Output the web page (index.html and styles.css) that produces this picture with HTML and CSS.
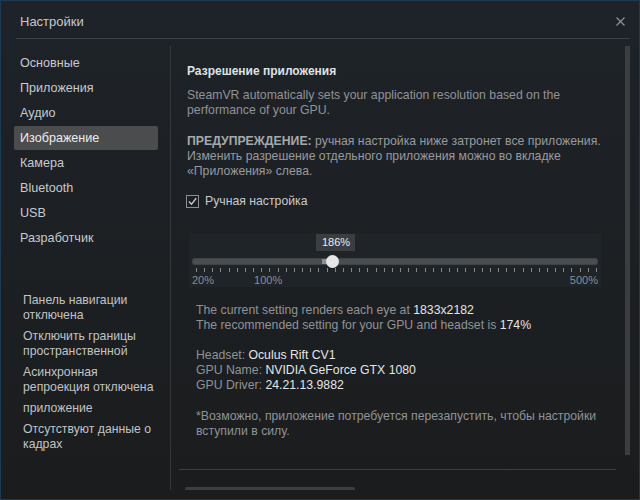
FILE: index.html
```html
<!DOCTYPE html>
<html lang="ru">
<head>
    <meta charset="UTF-8">
    <title>Настройки</title>
    <link rel="stylesheet" href="styles.css">
</head>
<body>
    <div class="window">
        <div class="titlebar">
            <span class="title">Настройки</span>
            <svg class="close" width="9" height="9" viewBox="0 0 9 9">
                <path d="M0.5 0.5 L8.5 8.5 M8.5 0.5 L0.5 8.5" stroke="#8f9296" stroke-width="1.2" fill="none"/>
            </svg>
        </div>
        <div class="title-rule"></div>

        <div class="body">
            <div class="sidebar">
                <div class="nav">
                    <a href="#">Основные</a>
                    <a href="#">Приложения</a>
                    <a href="#">Аудио</a>
                    <a href="#" class="active">Изображение</a>
                    <a href="#">Камера</a>
                    <a href="#">Bluetooth</a>
                    <a href="#">USB</a>
                    <a href="#">Разработчик</a>
                </div>
                <ul class="status">
                    <li>Панель навигации отключена</li>
                    <li>Отключить границы пространственной</li>
                    <li>Асинхронная репроекция отключена</li>
                    <li>приложение</li>
                    <li>Отсутствуют данные о кадрах</li>
                </ul>
            </div>

            <div class="main">
                <div class="pane">
                    <div class="scroll">
                        <h2>Разрешение приложения</h2>
                        <p class="lead">SteamVR automatically sets your application resolution based on the performance of your GPU.</p>
                        <p class="warn"><b>ПРЕДУПРЕЖДЕНИЕ:</b> ручная настройка ниже затронет все приложения. Изменить разрешение отдельного приложения можно во вкладке «Приложения» слева.</p>

                        <label class="check">
                            <svg width="13" height="13" viewBox="0 0 13 13">
                                <rect x="0.5" y="0.5" width="12" height="12" fill="#1c2025" stroke="#8c8f93"/>
                                <path d="M3 6.5 L5.5 9.2 L10.2 3.2" stroke="#c4c7ca" stroke-width="1.4" fill="none"/>
                            </svg>
                            <span>Ручная настройка</span>
                        </label>

                        <div class="slider-box">
                            <div class="bubble-row">
                                <span class="bubble" style="left: calc(34.6% - 16px)">186%</span>
                            </div>
                            <div class="track">
                                <span class="marker" style="left: 32.1%"></span>
                                <span class="thumb" style="left: calc(34.6% - 6.5px)"></span>
                            </div>
                            <div class="ticks"></div>
                            <div class="scale">
                                <span>20%</span>
                                <span class="mid">100%</span>
                                <span class="end">500%</span>
                            </div>
                        </div>

                        <div class="info">
                            <p>The current setting renders each eye at <span class="val">1833x2182</span><br>
                            The recommended setting for your GPU and headset is <span class="val">174%</span></p>
                            <p>Headset: <span class="val">Oculus Rift CV1</span><br>
                            GPU Name: <span class="val">NVIDIA GeForce GTX 1080</span><br>
                            GPU Driver: <span class="val">24.21.13.9882</span></p>
                            <p class="note">*Возможно, приложение потребуется перезапустить, чтобы настройки вступили в силу.</p>
                        </div>
                    </div>
                    <div class="scrollbar"></div>
                </div>
                <div class="footer-rule"></div>
                <div class="footer-btn"></div>
            </div>
        </div>
    </div>
</body>
</html>
```
FILE: styles.css
```css
* { box-sizing: border-box; }
body { margin: 0; background: #1b1c1d; font-family: "Liberation Sans", Arial, sans-serif; font-size: 12.25px; }
.window { width: 640px; height: 500px; border: 1px solid #1d3a50; background: linear-gradient(#1e2329, #1c1f22 60%, #1b1c1d); display: flex; flex-direction: column; overflow: hidden; }

.titlebar { height: 37px; padding: 4px 14px 0 19px; display: flex; align-items: center; justify-content: space-between; }
.title { color: #c4c8cc; font-size: 13px; }
.title-rule { height: 1px; margin: 0 9px 0 15px; background: #3d4044; }

.body { flex: 1; display: flex; padding: 7px 0 9px; min-height: 0; }

.sidebar { width: 170px; padding: 5px 12px 0 13px; border-right: 1px solid #35383b; }
.nav a { display: block; height: 24px; line-height: 25px; margin-bottom: 1px; padding-left: 6px; color: #c7cacd; font-size: 12.6px; text-decoration: none; border-radius: 2px; }
.nav a.active { background: #4b4c4e; color: #eceded; }
.status { list-style: none; margin: 43px 0 0; padding: 0 0 0 9px; color: #c0c3c6; line-height: 15px; }
.status li { margin-bottom: 6px; }

.main { flex: 1; display: flex; flex-direction: column; overflow: hidden; }
.pane { display: flex; height: 409px; flex-shrink: 0; }
.scroll { flex: 1; padding: 18px 13px 0 16px; line-height: 15px; }
.scrollbar { width: 5px; margin-right: 9px; background: #3c3d3f; }
.footer-rule { flex-shrink: 0; height: 1px; margin: 14px 23px 0 8px; background: #3d3f42; }
.footer-btn { flex-shrink: 0; width: 170px; height: 12px; margin: 17px 0 0 14px; background: #3d3e40; border-radius: 2px 2px 0 0; }

h2 { margin: 0; font-size: 12px; color: #dfe1e3; }
.lead { margin: 9px 0 0; color: #8f9397; }
.warn { margin: 16px 0 0; color: #979a9e; }
.warn b { color: #a6a9ac; }

.check { display: flex; align-items: center; height: 15px; margin-top: 15px; color: #c7cacd; }
.check svg { margin: 0 6px 0 -1px; }

.slider-box { margin: 24px 0 0 2px; width: 412px; height: 54px; padding: 1px 3px 0; background: #1f2429; }
.bubble-row { position: relative; height: 17px; }
.bubble { position: absolute; top: 0; width: 39px; height: 17px; line-height: 17px; text-align: center; background: #3b3e41; color: #ececec; font-size: 11px; }
.track { position: relative; height: 7px; margin-top: 7px; border-radius: 4px; background: #4b4e51; box-shadow: inset 0 0 0 1px #404346; }
.marker { position: absolute; top: 1px; width: 5px; height: 5px; background: #8c8e90; }
.thumb { position: absolute; top: -3px; width: 13px; height: 13px; border-radius: 50%; background: #e6e6e6; }
.ticks { width: 401px; height: 4px; margin: 3px 0 0 4px; background: repeating-linear-gradient(to right, #85888b 0 1px, transparent 1px 8.163px); }
.scale { display: flex; margin-top: 2px; line-height: 13px; font-size: 11px; color: #8b8e91; }
.scale .mid { margin-left: 40px; }
.scale .end { margin-left: auto; }

.info { margin-top: 16px; padding-left: 9px; color: #8f9397; }
.info p { margin: 0 0 15px; }
.info p.note { margin-top: 16px; }
.val { color: #e4e5e6; }
```
